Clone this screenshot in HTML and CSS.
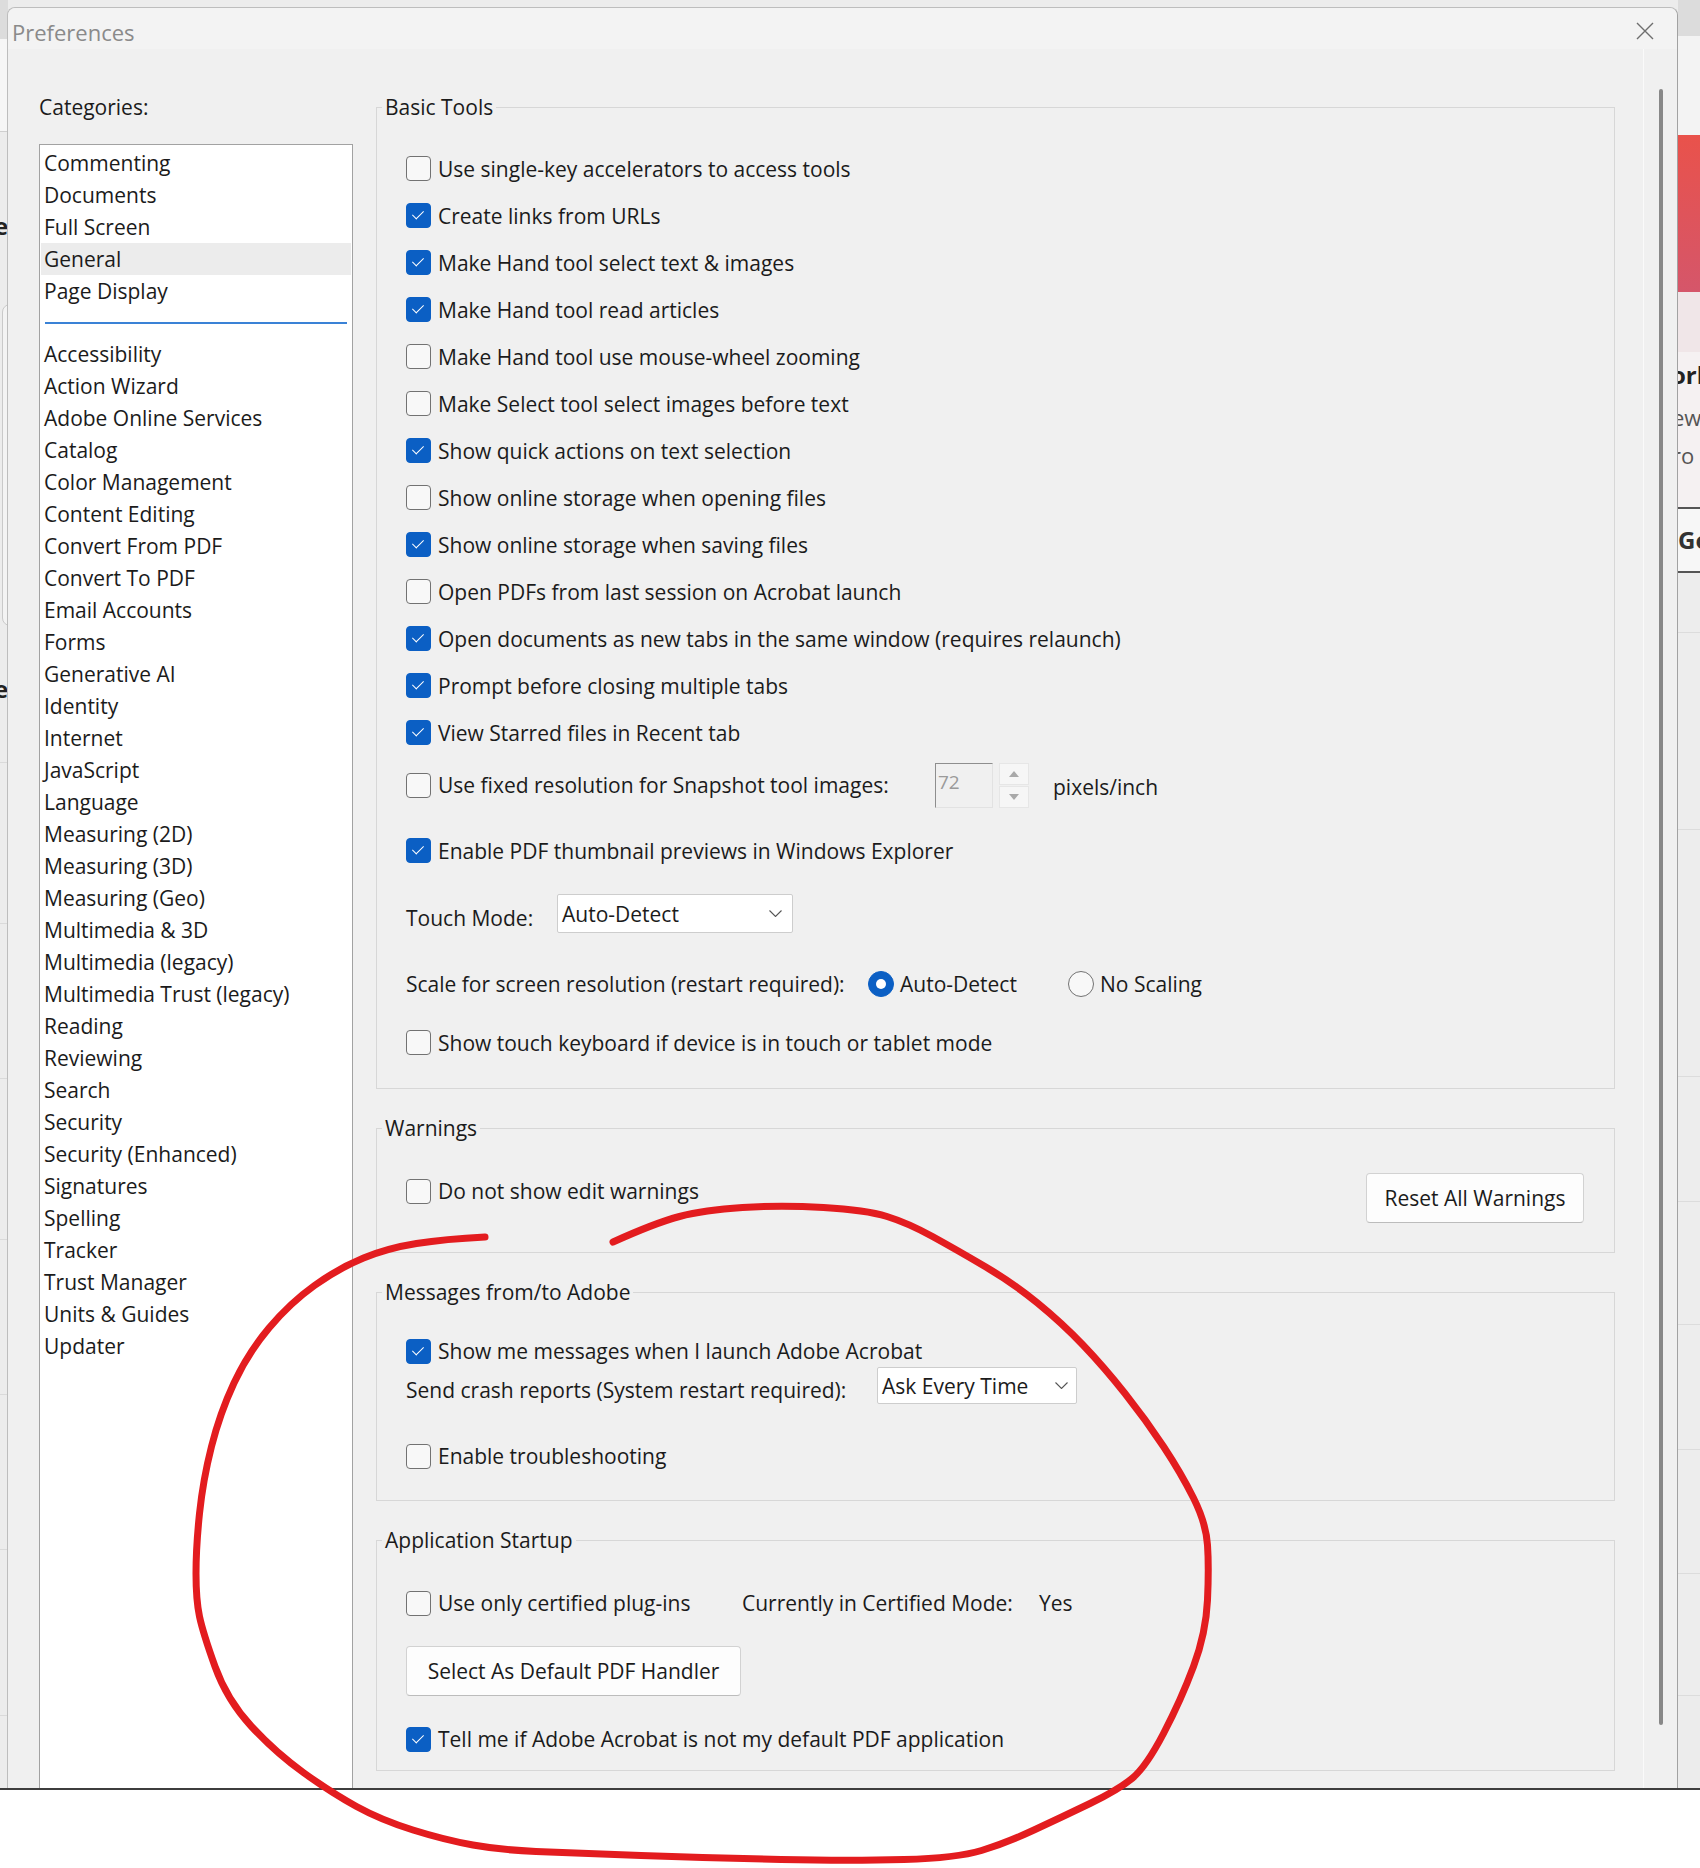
FILE: index.html
```html
<!DOCTYPE html>
<html lang="en">
<head>
    <meta charset="UTF-8">
    <title>Preferences</title>
    <link rel="stylesheet" href="styles.css">
</head>
<body>
<div class="screen">
    <div class="desktop">
        <!-- bits of the window behind the dialog -->
        <div class="peek peek-left">
            <div class="pl-top"></div>
            <div class="pl-band"></div>
            <div class="pl-gap1"></div>
            <div class="pl-glyph">e</div>
            <div class="pl-gap2"></div>
            <div class="pl-card"></div>
            <div class="pl-gap3"></div>
            <div class="pl-glyph">e</div>
            <div class="pl-row pl-h54"></div>
            <div class="pl-row pl-h161"></div>
            <div class="pl-row pl-h155"></div>
            <div class="pl-row pl-h161"></div>
            <div class="pl-row pl-h155"></div>
            <div class="pl-row pl-h155"></div>
            <div class="pl-row pl-h166"></div>
        </div>
        <div class="peek peek-right">
            <div class="pr-top"></div>
            <div class="pr-band"></div>
            <div class="pr-hero"></div>
            <div class="pr-pink"></div>
            <div class="pr-head">orl</div>
            <div class="pr-line">ew</div>
            <div class="pr-line">ro</div>
            <div class="pr-gap"></div>
            <div class="pr-tab">Go</div>
            <div class="pr-row pr-h60"></div>
            <div class="pr-row pr-h197"></div>
            <div class="pr-row pr-h247"></div>
            <div class="pr-row pr-h125"></div>
            <div class="pr-row pr-h123"></div>
            <div class="pr-row pr-h125"></div>
            <div class="pr-row pr-h124"></div>
            <div class="pr-row pr-h122"></div>
        </div>

        <div class="dialog">
            <div class="titlebar">
                <span class="title">Preferences</span>
                <svg class="close" width="18" height="18" viewBox="0 0 18 18">
                    <path d="M1 1L17 17M17 1L1 17" stroke="#6e6e6e" stroke-width="1.4" fill="none"/>
                </svg>
            </div>

            <div class="dialog-body">
                <div class="categories">
                    <div class="cat-label">Categories:</div>
                    <div class="cat-list">
                        <div class="cat-item">Commenting</div>
                        <div class="cat-item">Documents</div>
                        <div class="cat-item">Full Screen</div>
                        <div class="cat-item selected">General</div>
                        <div class="cat-item">Page Display</div>
                        <div class="cat-sep"></div>
                        <div class="cat-item">Accessibility</div>
                        <div class="cat-item">Action Wizard</div>
                        <div class="cat-item">Adobe Online Services</div>
                        <div class="cat-item">Catalog</div>
                        <div class="cat-item">Color Management</div>
                        <div class="cat-item">Content Editing</div>
                        <div class="cat-item">Convert From PDF</div>
                        <div class="cat-item">Convert To PDF</div>
                        <div class="cat-item">Email Accounts</div>
                        <div class="cat-item">Forms</div>
                        <div class="cat-item">Generative AI</div>
                        <div class="cat-item">Identity</div>
                        <div class="cat-item">Internet</div>
                        <div class="cat-item">JavaScript</div>
                        <div class="cat-item">Language</div>
                        <div class="cat-item">Measuring (2D)</div>
                        <div class="cat-item">Measuring (3D)</div>
                        <div class="cat-item">Measuring (Geo)</div>
                        <div class="cat-item">Multimedia &amp; 3D</div>
                        <div class="cat-item">Multimedia (legacy)</div>
                        <div class="cat-item">Multimedia Trust (legacy)</div>
                        <div class="cat-item">Reading</div>
                        <div class="cat-item">Reviewing</div>
                        <div class="cat-item">Search</div>
                        <div class="cat-item">Security</div>
                        <div class="cat-item">Security (Enhanced)</div>
                        <div class="cat-item">Signatures</div>
                        <div class="cat-item">Spelling</div>
                        <div class="cat-item">Tracker</div>
                        <div class="cat-item">Trust Manager</div>
                        <div class="cat-item">Units &amp; Guides</div>
                        <div class="cat-item">Updater</div>
                    </div>
                </div>

                <div class="panels">
                    <fieldset class="group basic">
                        <legend>Basic Tools</legend>
                        <div class="group-body">
                            <div class="opt"><span class="box"></span>Use single-key accelerators to access tools</div>
                            <div class="opt"><span class="box on"></span>Create links from URLs</div>
                            <div class="opt"><span class="box on"></span>Make Hand tool select text &amp; images</div>
                            <div class="opt"><span class="box on"></span>Make Hand tool read articles</div>
                            <div class="opt"><span class="box"></span>Make Hand tool use mouse-wheel zooming</div>
                            <div class="opt"><span class="box"></span>Make Select tool select images before text</div>
                            <div class="opt"><span class="box on"></span>Show quick actions on text selection</div>
                            <div class="opt"><span class="box"></span>Show online storage when opening files</div>
                            <div class="opt"><span class="box on"></span>Show online storage when saving files</div>
                            <div class="opt"><span class="box"></span>Open PDFs from last session on Acrobat launch</div>
                            <div class="opt"><span class="box on"></span>Open documents as new tabs in the same window (requires relaunch)</div>
                            <div class="opt"><span class="box on"></span>Prompt before closing multiple tabs</div>
                            <div class="opt"><span class="box on"></span>View Starred files in Recent tab</div>

                            <div class="opt snapshot">
                                <div class="opt-check snap-check"><span class="box"></span>Use fixed resolution for Snapshot tool images:</div>
                                <div class="spin-field">72</div>
                                <div class="spin-btns">
                                    <div class="spin-btn">
                                        <svg width="10" height="6" viewBox="0 0 10 6"><path d="M0 6L5 0L10 6Z" fill="#a9a9a9"/></svg>
                                    </div>
                                    <div class="spin-btn">
                                        <svg width="10" height="6" viewBox="0 0 10 6"><path d="M0 0L5 6L10 0Z" fill="#a9a9a9"/></svg>
                                    </div>
                                </div>
                                <span class="unit">pixels/inch</span>
                            </div>

                            <div class="opt thumbs"><span class="box on"></span>Enable PDF thumbnail previews in Windows Explorer</div>

                            <div class="opt touch-mode">
                                <span class="field-label touch-label">Touch Mode:</span>
                                <div class="select touch-select">
                                    <span>Auto-Detect</span>
                                    <svg width="13" height="7" viewBox="0 0 13 7"><path d="M0.5 0.5L6.5 6.5L12.5 0.5" stroke="#555" stroke-width="1.1" fill="none"/></svg>
                                </div>
                            </div>

                            <div class="opt scale">
                                <span class="scale-label">Scale for screen resolution (restart required):</span>
                                <span class="radio first"><span class="dot on"></span>Auto-Detect</span>
                                <span class="radio"><span class="dot"></span>No Scaling</span>
                            </div>

                            <div class="opt keyboard"><span class="box"></span>Show touch keyboard if device is in touch or tablet mode</div>
                        </div>
                    </fieldset>

                    <fieldset class="group warnings">
                        <legend>Warnings</legend>
                        <div class="group-body">
                            <div class="warn-row">
                                <div class="opt compact"><span class="box"></span>Do not show edit warnings</div>
                                <button class="btn reset-btn">Reset All Warnings</button>
                            </div>
                        </div>
                    </fieldset>

                    <fieldset class="group messages">
                        <legend>Messages from/to Adobe</legend>
                        <div class="group-body">
                            <div class="opt compact"><span class="box on"></span>Show me messages when I launch Adobe Acrobat</div>
                            <div class="crash-row">
                                <span class="field-label crash-label">Send crash reports (System restart required):</span>
                                <div class="select crash-select">
                                    <span>Ask Every Time</span>
                                    <svg width="13" height="7" viewBox="0 0 13 7"><path d="M0.5 0.5L6.5 6.5L12.5 0.5" stroke="#555" stroke-width="1.1" fill="none"/></svg>
                                </div>
                            </div>
                            <div class="opt compact troubleshoot"><span class="box"></span>Enable troubleshooting</div>
                        </div>
                    </fieldset>

                    <fieldset class="group startup">
                        <legend>Application Startup</legend>
                        <div class="group-body">
                            <div class="opt compact">
                                <div class="opt-check plugin-check"><span class="box"></span>Use only certified plug-ins</div>
                                <span class="mode-label">Currently in Certified Mode:</span>
                                <span>Yes</span>
                            </div>
                            <button class="btn handler-btn">Select As Default PDF Handler</button>
                            <div class="opt compact tell-me"><span class="box on"></span>Tell me if Adobe Acrobat is not my default PDF application</div>
                        </div>
                    </fieldset>
                </div>

                <div class="scroll-rail">
                    <div class="scroll-thumb"></div>
                </div>
            </div>
        </div>
    </div>
    <div class="desk-edge"></div>

    <!-- red pen mark drawn over the screenshot -->
    <svg class="ink" width="1700" height="1868" viewBox="0 0 1700 1868">
        <path d="M485 1237 Q445 1239 416.5 1243.5 Q388 1248 363.5 1258 Q339 1268 314.5 1285.5 Q290 1303 269 1328 Q248 1353 234 1383 Q220 1413 211.5 1446.5 Q203 1480 199.5 1513.5 Q196 1547 196 1573.5 Q196 1600 199.5 1616.5 Q203 1633 215 1666.5 Q227 1700 251.5 1726.5 Q276 1753 304 1773 Q332 1793 356.5 1806.5 Q381 1820 413 1830 Q445 1840 473 1845 Q501 1850 536 1851.5 Q571 1853 641 1855.5 Q711 1858 781 1859.5 Q851 1861 904 1859.5 Q957 1858 981.5 1850.5 Q1006 1843 1034 1830 Q1062 1817 1090 1803.5 Q1118 1790 1132 1778.5 Q1146 1767 1163.5 1733.5 Q1181 1700 1193.5 1666.5 Q1206 1633 1207.5 1600 Q1209 1567 1207.5 1545 Q1206 1523 1193.5 1498 Q1181 1473 1163.5 1446.5 Q1146 1420 1125 1393.5 Q1104 1367 1083 1345 Q1062 1323 1037.5 1303 Q1013 1283 985 1266.5 Q957 1250 932.5 1236.5 Q908 1223 887 1216.5 Q866 1210 823.5 1207.5 Q781 1205 742.5 1207.5 Q704 1210 679.5 1216.5 Q655 1223 613 1242" stroke="#e31c1f" stroke-width="7" stroke-linecap="round" stroke-linejoin="round" fill="none"/>
    </svg>
</div>
</body>
</html>
```

FILE: styles.css
```css
* {
    margin: 0;
    padding: 0;
    box-sizing: border-box;
}

body {
    width: 1700px;
    height: 1868px;
    overflow: hidden;
    background: #fff;
    font-family: 'Open Sans', 'Noto Sans', sans-serif;
    font-size: 21px;
    color: #1b1b1b;
}

.screen {
    position: relative;
    width: 1700px;
    height: 1868px;
}

.desktop {
    position: relative;
    height: 1788px;
    overflow: hidden;
    background: #ececec;
}

.desk-edge {
    height: 2px;
    background: #3e3e3e;
}

.ink {
    position: absolute;
    left: 0;
    top: 0;
    pointer-events: none;
}

/* window behind */
.peek {
    position: absolute;
    top: 0;
    overflow: hidden;
    display: flex;
    flex-direction: column;
}

.peek-left {
    left: 0;
    width: 8px;
}

.pl-top { height: 39px; background: #dcdcdc; }
.pl-band { height: 93px; background: #f6f6f6; border-bottom: 1px solid #cfcfcf; }
.pl-gap1 { height: 74px; }
.pl-gap2 { height: 58px; }
.pl-gap3 { height: 43px; }

.pl-glyph {
    height: 40px;
    line-height: 40px;
    font-size: 24px;
    font-weight: bold;
    color: #222;
    text-indent: -6px;
}

.pl-card {
    height: 322px;
    width: 30px;
    margin-left: 2px;
    border: 1px solid #c9c9c9;
    border-radius: 8px;
    background: #f3f3f3;
}

.pl-row { border-bottom: 1px solid #dadada; }
.pl-h54 { height: 54px; }
.pl-h155 { height: 155px; }
.pl-h161 { height: 161px; }
.pl-h166 { height: 166px; }

.peek-right {
    left: 1678px;
    width: 22px;
    background: #ededed;
}

.pr-top { height: 36px; background: #dcdcdc; }
.pr-band { height: 99px; background: #f3f3f3; }
.pr-hero { height: 157px; background: linear-gradient(#e9524b, #d5566a); }
.pr-pink { height: 60px; background: #f0e6e8; }

.pr-head {
    height: 46px;
    line-height: 46px;
    font-size: 24px;
    font-weight: bold;
    text-indent: -7px;
    white-space: nowrap;
    background: #f5f1f2;
    color: #222;
}

.pr-line {
    height: 38px;
    line-height: 38px;
    font-size: 22px;
    text-indent: -6px;
    background: #f5f1f2;
    color: #555;
}

.pr-gap {
    height: 35px;
    background: #f5f1f2;
    border-bottom: 2px solid #555;
}

.pr-tab {
    height: 64px;
    line-height: 62px;
    font-size: 24px;
    font-weight: bold;
    color: #333;
    border-bottom: 2px solid #555;
    background: #f7f7f7;
}

.pr-row { border-bottom: 1px solid #dcdcdc; }
.pr-h60 { height: 60px; }
.pr-h122 { height: 122px; }
.pr-h123 { height: 123px; }
.pr-h124 { height: 124px; }
.pr-h125 { height: 125px; }
.pr-h197 { height: 197px; }
.pr-h247 { height: 247px; }

/* dialog */
.dialog {
    position: absolute;
    left: 7px;
    top: 7px;
    width: 1671px;
    height: 1820px;
    display: flex;
    flex-direction: column;
    background: #f0f0f0;
    border: 1px solid #bdbdbd;
    border-right-color: #a2a2a2;
    border-radius: 8px 8px 0 0;
}

.titlebar {
    height: 41px;
    flex: none;
    display: flex;
    justify-content: space-between;
    align-items: flex-start;
    padding: 9px 23px 0 4px;
    background: #f3f3f3;
    border-radius: 8px 8px 0 0;
}

.title {
    font-size: 22px;
    line-height: 30px;
    color: #8a8a8a;
}

.close {
    margin-top: 5px;
}

.dialog-body {
    flex: 1;
    display: flex;
    padding: 43px 0 0 31px;
}

/* categories list */
.categories {
    width: 314px;
    flex: none;
}

.cat-label {
    line-height: 30px;
    margin-bottom: 22px;
}

.cat-list {
    height: 1700px;
    padding: 2px 1px 0;
    background: #fff;
    border: 1px solid #a2a2a2;
}

.cat-item {
    height: 32px;
    line-height: 32px;
    padding-left: 3px;
    white-space: nowrap;
}

.cat-item.selected {
    background: #ececec;
}

.cat-sep {
    height: 31px;
    display: flex;
    align-items: center;
    padding: 0 4px;
}

.cat-sep::before {
    content: "";
    flex: 1;
    height: 2px;
    background: #3a82d6;
}

/* right side groups */
.panels {
    width: 1239px;
    flex: none;
    margin-left: 23px;
}

.scroll-rail {
    width: 34px;
    margin-left: 28px;
    margin-top: -43px;
    padding-left: 15px;
    border-left: 1px solid #fafafa;
}

.scroll-thumb {
    width: 4px;
    height: 1636px;
    margin-top: 40px;
    background: #888;
    border-radius: 2px;
}

.group {
    margin: 0;
    padding: 0;
    min-width: 0;
    border: 1px solid #d7d7d7;
}

.group + .group {
    margin-top: 24px;
}

.group legend {
    font-size: 21px;
    line-height: 30px;
    padding: 0 3px;
    margin-left: 5px;
}

.group-body {
    padding: 23px 30px 22px 29px;
}

.warnings .group-body { padding-top: 30px; padding-bottom: 29px; }
.messages .group-body { padding-top: 26px; padding-bottom: 26px; }
.startup .group-body { padding-top: 30px; padding-bottom: 13px; }

.opt {
    display: flex;
    align-items: center;
    height: 47px;
    white-space: nowrap;
}

.opt.compact {
    height: 36px;
}

.opt-check {
    display: flex;
    align-items: center;
    flex: none;
}

.box {
    position: relative;
    width: 25px;
    height: 25px;
    flex: none;
    margin-right: 7px;
    background: #f8f8f8;
    border: 1.5px solid #727272;
    border-radius: 4px;
}

.box.on {
    background: #0b5fc4;
    border-color: #0b5fc4;
}

.box.on::after {
    content: "";
    position: absolute;
    left: 8px;
    top: 4px;
    width: 5px;
    height: 10px;
    border: solid #fff;
    border-width: 0 1.5px 1.5px 0;
    transform: rotate(45deg);
}

/* snapshot resolution */
.snapshot {
    height: 58px;
}

.snap-check {
    width: 529px;
}

.spin-field {
    width: 58px;
    height: 45px;
    padding: 5px 2px 0;
    font-size: 19px;
    line-height: 26px;
    color: #9a9a9a;
    border: 1px solid;
    border-color: #8e8e8e #e2e2e2 #e2e2e2 #8e8e8e;
}

.spin-btns {
    width: 30px;
    height: 45px;
    margin-left: 6px;
    display: flex;
    flex-direction: column;
    gap: 1px;
}

.spin-btn {
    flex: 1;
    display: flex;
    align-items: center;
    justify-content: center;
    background: #f6f6f6;
    border: 1px solid #e6e6e6;
}

.unit {
    margin-left: 24px;
    margin-top: 4px;
}

.thumbs { margin-top: 13px; }
.touch-mode { margin-top: 16px; }
.scale { margin-top: 23px; }
.keyboard { margin-top: 12px; }

.field-label {
    flex: none;
    margin-top: 9px;
}

.touch-label { width: 151px; }
.crash-label { width: 471px; }

.select {
    display: flex;
    align-items: center;
    justify-content: space-between;
    padding: 0 10px 0 4px;
    background: #fff;
    border: 1px solid #cdcdcd;
    border-radius: 2px;
}

.touch-select {
    width: 236px;
    height: 39px;
}

.crash-select {
    width: 200px;
    height: 37px;
    padding-right: 8px;
}

.scale-label {
    width: 462px;
    flex: none;
}

.radio {
    display: flex;
    align-items: center;
}

.radio.first {
    width: 200px;
}

.dot {
    width: 26px;
    height: 26px;
    flex: none;
    margin-right: 6px;
    background: #f8f8f8;
    border: 1.5px solid #727272;
    border-radius: 50%;
}

.dot.on {
    display: flex;
    align-items: center;
    justify-content: center;
    background: #0b5fc4;
    border-color: #0b5fc4;
}

.dot.on::after {
    content: "";
    width: 10px;
    height: 10px;
    border-radius: 50%;
    background: #fff;
}

/* warnings */
.warn-row {
    display: flex;
    justify-content: space-between;
    align-items: flex-start;
}

.btn {
    display: flex;
    align-items: center;
    justify-content: center;
    height: 50px;
    font-family: inherit;
    font-size: 21px;
    color: #1b1b1b;
    background: #fdfdfd;
    border: 1px solid #d2d2d2;
    border-bottom-color: #bcbcbc;
    border-radius: 4px;
}

.reset-btn { width: 218px; }

/* messages */
.crash-row {
    display: flex;
    align-items: center;
    height: 37px;
    margin-top: -2px;
}

.troubleshoot { margin-top: 34px; }

/* startup */
.plugin-check { width: 336px; }

.mode-label {
    width: 297px;
    flex: none;
}

.handler-btn {
    width: 335px;
    margin-top: 25px;
}

.tell-me { margin-top: 25px; }
```
